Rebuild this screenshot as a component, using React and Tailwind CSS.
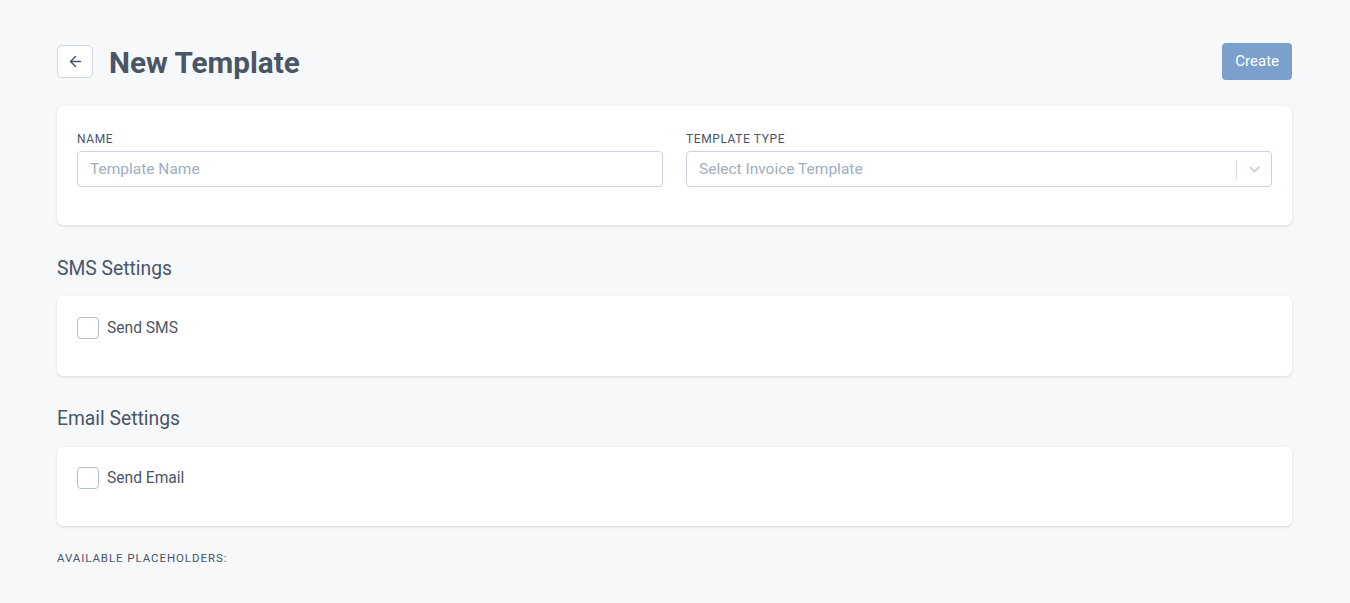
import { ArrowLeft, ChevronDown } from 'lucide-react'

const Card = ({ className = '', children }) => (
  <div className={`bg-white rounded-md shadow-[0_1px_3px_rgba(0,0,0,0.12)] ${className}`}>{children}</div>
)

const Check = ({ label }) => (
  <label className="flex items-center gap-2 h-[22px]">
    <span className="w-[22px] h-[22px] rounded-[4px] border border-[#b4bfcc] bg-white" />
    <span className="pt-[2px] text-[15.6px] text-[#4a5568]">{label}</span>
  </label>
)

export default function App() {
  return (
    <div className="min-h-screen bg-[#f7f8fa] font-['Roboto',sans-serif] pl-[57px] pr-[58px] pt-[43px] pb-10">
      {/* Header */}
      <div className="flex items-center justify-between h-[37px]">
        <div className="flex items-center gap-4">
          <button className="w-9 h-[33px] rounded-[5px] border border-[#cfd6df] bg-white flex items-center justify-center text-[#4a5568]">
            <ArrowLeft size={17} strokeWidth={2} />
          </button>
          <h1 className="pt-[2px] text-[29.7px] font-bold text-[#4a5568] leading-none">New Template</h1>
        </div>
        <button className="h-[37px] px-[13px] rounded-[4px] bg-[#7ba0cc] text-white text-[15px]">Create</button>
      </div>

      {/* Template info */}
      <Card className="mt-[26px] px-5 pt-[25px] pb-[38px]">
        <div className="grid grid-cols-2 gap-[23px]">
          <div>
            <div className="text-[12px] leading-4 tracking-[0.05em] uppercase text-[#4a5568] mb-1">Name</div>
            <div className="h-9 rounded-[4px] border border-[#cbd3dc] flex items-center px-3 pt-[2px] text-[15.5px] text-[#a0aec0]">
              Template Name
            </div>
          </div>
          <div>
            <div className="text-[12px] leading-4 tracking-[0.05em] uppercase text-[#4a5568] mb-1">Template Type</div>
            <div className="h-9 rounded-[4px] border border-[#cbd3dc] flex items-center pl-3 text-[15.5px] text-[#a0aec0]">
              <span className="flex-1 pt-[2px]">Select Invoice Template</span>
              <span className="w-px h-[19px] bg-[#d6dce3]" />
              <span className="w-[34px] flex justify-center text-[#c3ccd6]">
                <ChevronDown size={17} strokeWidth={2} />
              </span>
            </div>
          </div>
        </div>
      </Card>

      {/* SMS */}
      <h2 className="mt-[32px] mb-[15px] text-[19.3px] leading-6 text-[#4a5568]">SMS Settings</h2>
      <Card className="px-5 pt-[21px] pb-[37px]">
        <Check label="Send SMS" />
      </Card>

      {/* Email */}
      <h2 className="mt-[31px] mb-[16px] text-[19.3px] leading-6 text-[#4a5568]">Email Settings</h2>
      <Card className="px-5 pt-[20px] pb-[37px]">
        <Check label="Send Email" />
      </Card>

      <div className="mt-[24px] text-[11.5px] leading-4 tracking-[0.08em] uppercase text-[#4a5568]">
        Available Placeholders:
      </div>
    </div>
  )
}
